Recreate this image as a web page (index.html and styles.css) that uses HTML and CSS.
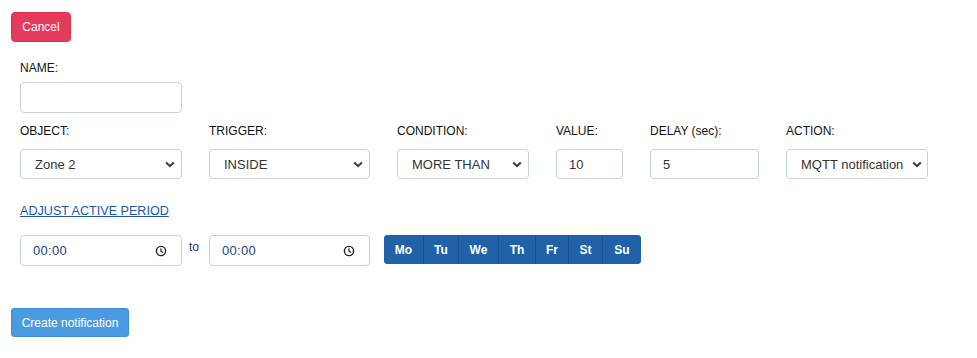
FILE: index.html
```html
<!DOCTYPE html>
<html lang="en">

<head>
    <meta charset="utf-8">
    <title>Create notification</title>
    <link rel="stylesheet" href="styles.css">
</head>

<body>
    <div class="page">
        <button class="btn btn-cancel">Cancel</button>

        <div class="form">
            <div class="field name-field">
                <label class="label" for="name">NAME:</label>
                <input type="text" id="name" class="control name-input">
            </div>

            <div class="row">
                <div class="field">
                    <label class="label">OBJECT:</label>
                    <div class="select w-object">
                        <span>Zone 2</span>
                        <svg class="chevron" width="10" height="7" viewBox="0 0 10 7"><path d="M1.2 1.5 L5 5.2 L8.8 1.5" fill="none" stroke="#343a40" stroke-width="2"/></svg>
                    </div>
                </div>
                <div class="field">
                    <label class="label">TRIGGER:</label>
                    <div class="select w-trigger">
                        <span>INSIDE</span>
                        <svg class="chevron" width="10" height="7" viewBox="0 0 10 7"><path d="M1.2 1.5 L5 5.2 L8.8 1.5" fill="none" stroke="#343a40" stroke-width="2"/></svg>
                    </div>
                </div>
                <div class="field">
                    <label class="label">CONDITION:</label>
                    <div class="select w-condition">
                        <span>MORE THAN</span>
                        <svg class="chevron" width="10" height="7" viewBox="0 0 10 7"><path d="M1.2 1.5 L5 5.2 L8.8 1.5" fill="none" stroke="#343a40" stroke-width="2"/></svg>
                    </div>
                </div>
                <div class="field">
                    <label class="label">VALUE:</label>
                    <input type="text" class="control w-value" value="10">
                </div>
                <div class="field">
                    <label class="label">DELAY (sec):</label>
                    <input type="text" class="control w-delay" value="5">
                </div>
                <div class="field">
                    <label class="label">ACTION:</label>
                    <div class="select w-action">
                        <span>MQTT notification</span>
                        <svg class="chevron" width="10" height="7" viewBox="0 0 10 7"><path d="M1.2 1.5 L5 5.2 L8.8 1.5" fill="none" stroke="#343a40" stroke-width="2"/></svg>
                    </div>
                </div>
            </div>

            <a href="#" class="period-link">ADJUST ACTIVE PERIOD</a>

            <div class="period-row">
                <div class="time">
                    <span>00:00</span>
                    <svg width="12" height="12" viewBox="0 0 12 12"><circle cx="6" cy="6" r="4.6" fill="none" stroke="#222" stroke-width="1.4"/><path d="M6 3.4 V6.2 L7.9 7.6" fill="none" stroke="#222" stroke-width="1.3"/></svg>
                </div>
                <span class="to">to</span>
                <div class="time">
                    <span>00:00</span>
                    <svg width="12" height="12" viewBox="0 0 12 12"><circle cx="6" cy="6" r="4.6" fill="none" stroke="#222" stroke-width="1.4"/><path d="M6 3.4 V6.2 L7.9 7.6" fill="none" stroke="#222" stroke-width="1.3"/></svg>
                </div>
                <div class="days">
                    <button class="day d-mo">Mo</button>
                    <button class="day d-tu">Tu</button>
                    <button class="day d-we">We</button>
                    <button class="day d-th">Th</button>
                    <button class="day d-fr">Fr</button>
                    <button class="day d-st">St</button>
                    <button class="day d-su">Su</button>
                </div>
            </div>
        </div>

        <button class="btn btn-create">Create notification</button>
    </div>
</body>

</html>
```

FILE: styles.css
```css
body {
    margin: 0;
    font-family: "Liberation Sans", Arial, sans-serif;
    color: #222;
    background: #fff;
}

.page {
    padding: 12px 11px;
    display: flex;
    flex-direction: column;
    align-items: flex-start;
}

.btn {
    border: 1px solid transparent;
    border-radius: 4px;
    color: #fff;
    font-family: "Liberation Sans", Arial, sans-serif;
    font-size: 12px;
    padding: 0;
    cursor: pointer;
}

.btn-cancel {
    width: 60px;
    height: 30px;
    background: #e63a5b;
    border-color: #e0304f;
}

.btn-create {
    width: 118px;
    height: 29px;
    margin-top: 42px;
    background: #4b9be0;
    border-color: #3f8ed6;
    border-radius: 3px;
}

.form {
    padding-left: 9px;
    display: flex;
    flex-direction: column;
    align-items: flex-start;
}

.field {
    display: flex;
    flex-direction: column;
}

.label {
    font-size: 12px;
    line-height: 14px;
    color: #111;
    margin-bottom: 11px;
}

.name-field {
    margin-top: 19px;
}

.name-field .label {
    margin-bottom: 7px;
}

.control,
.select,
.time {
    box-sizing: border-box;
    height: 30px;
    border: 1px solid #c6d3d3;
    border-radius: 4px;
    background: #fff;
    font-family: "Liberation Sans", Arial, sans-serif;
    font-size: 13px;
    color: #333;
}

.control {
    padding: 0 12px;
    outline: none;
}

.name-input {
    width: 162px;
    height: 31px;
}

.row {
    display: flex;
    gap: 27px;
    margin-top: 11px;
}

.select {
    display: flex;
    align-items: center;
    justify-content: space-between;
    padding: 0 6px 0 14px;
}

.chevron {
    flex: none;
}

.w-object { width: 162px; }
.w-trigger { width: 161px; }
.w-condition { width: 132px; }
.w-value { width: 67px; }
.w-delay { width: 109px; }
.w-action { width: 142px; padding-left: 14px; padding-right: 5px; }

.period-link {
    margin-top: 25px;
    font-size: 12.6px;
    line-height: 14px;
    color: #1c55a8;
    text-decoration: underline;
}

.period-row {
    display: flex;
    align-items: flex-start;
    margin-top: 17px;
}

.time {
    width: 162px;
    height: 31px;
    display: flex;
    align-items: center;
    justify-content: space-between;
    padding: 0 14px 0 12px;
    color: #1f3f7a;
    letter-spacing: 0.3px;
}

.to {
    box-sizing: border-box;
    width: 27px;
    padding-left: 7px;
    font-size: 12px;
    line-height: 14px;
    margin-top: 5px;
    color: #1a2c6e;
}

.period-row .time:nth-of-type(2) {
    width: 161px;
}

.days {
    display: flex;
    margin-left: 14px;
    height: 29px;
    border-radius: 4px;
    overflow: hidden;
    background: #2061a8;
}

.day {
    height: 29px;
    padding: 0;
    border: none;
    border-right: 1px solid #1a4f8c;
    background: #2061a8;
    color: #fff;
    font-family: "Liberation Sans", Arial, sans-serif;
    font-size: 12px;
    font-weight: bold;
}

.day:last-child {
    border-right: none;
}

.d-mo { width: 40px; }
.d-tu { width: 35px; }
.d-we { width: 40px; }
.d-th { width: 37px; }
.d-fr { width: 33px; }
.d-st { width: 34px; }
.d-su { width: 38px; }
```
